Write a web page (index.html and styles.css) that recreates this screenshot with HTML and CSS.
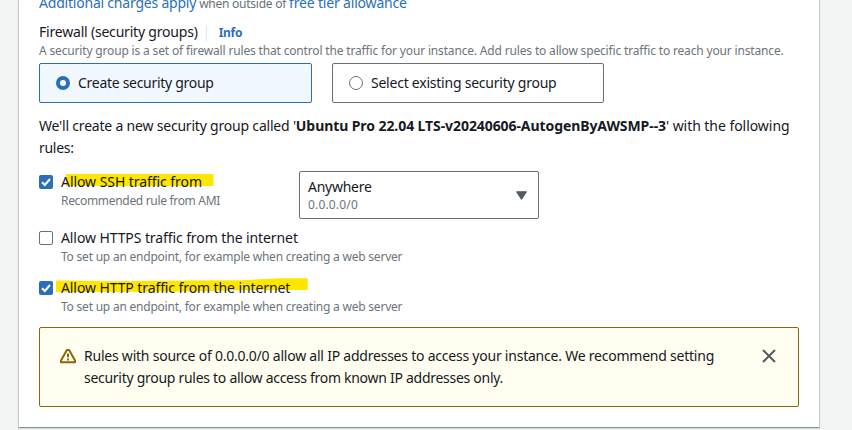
FILE: index.html
```
<!DOCTYPE html>
<html lang="en">
<head>
<meta charset="utf-8">
<title>Firewall (security groups)</title>
<link rel="stylesheet" href="styles.css">
</head>
<body>
<main class="card">
  <p class="charges"><a class="link charges-link">Additional charges apply</a><span class="charges-note">when outside of</span><a class="link tier-link">free tier allowance</a></p>

  <header class="field-header"><h2>Firewall (security groups)</h2><a class="info">Info</a></header>
  <p class="hint field-hint">A security group is a set of firewall rules that control the traffic for your instance. Add rules to allow specific traffic to reach your instance.</p>

  <div class="tiles">
    <label class="tile tile-selected"><span class="radio radio-on"></span><span class="create-label">Create security group</span></label>
    <label class="tile"><span class="radio"></span><span class="select-label">Select existing security group</span></label>
  </div>

  <p class="summary"><span class="summary-lead">We'll create a new security group called '</span><b>Ubuntu Pro 22.04 LTS-v20240606-AutogenByAWSMP--3</b><span class="summary-tail">' with the following</span><br><span class="summary-end">rules:</span></p>

  <section class="rules">
    <div class="rule rule-ssh">
      <span class="checkbox checked"><svg viewBox="0 0 14 14"><path d="M3 7.2 5.8 10 11 4"/></svg></span>
      <div class="rule-text">
        <svg class="marker marker-ssh" viewBox="0 0 148 12" preserveAspectRatio="none"><path d="M0 0H147.5V12H0Z"/></svg>
        <div class="rule-title ssh-title">Allow SSH traffic from</div>
        <div class="hint ami-hint">Recommended rule from AMI</div>
      </div>
      <div class="select">
        <div class="select-text"><div class="select-value">Anywhere</div><div class="hint select-hint">0.0.0.0/0</div></div>
        <svg class="caret" viewBox="0 0 10 8"><path d="M.7 .7H9.3L5 7.3Z"/></svg>
      </div>
    </div>
    <div class="rule rule-web">
      <span class="checkbox"></span>
      <div class="rule-text">
        <div class="rule-title">Allow HTTPS traffic from the internet</div>
        <div class="hint web-hint">To set up an endpoint, for example when creating a web server</div>
      </div>
    </div>
    <div class="rule rule-web">
      <span class="checkbox checked"><svg viewBox="0 0 14 14"><path d="M3 7.2 5.8 10 11 4"/></svg></span>
      <div class="rule-text">
        <svg class="marker marker-http" viewBox="0 0 252 15"><path d="M0 2.5 60 3.2 130 2.6 185 2.2 225 .2H251.7V12H205L130 13.5 70 14H0Z"/></svg>
        <div class="rule-title">Allow HTTP traffic from the internet</div>
        <div class="hint web-hint">To set up an endpoint, for example when creating a web server</div>
      </div>
    </div>
  </section>

  <aside class="alert">
    <svg class="warning" viewBox="0 0 16 16"><path d="M6.9 2 1 12.6V14.2H15V12.6L9.1 2Z"/><path d="M8 5.4V9.2M8 10.4V12.4"/></svg>
    <p class="alert-text"><span class="alert-first">Rules with source of 0.0.0.0/0 allow all IP addresses to access your instance. We recommend setting</span><br><span class="alert-second">security group rules to allow access from known IP addresses only.</span></p>
    <svg class="close" viewBox="0 0 14 14"><path d="M1 1 13 13M13 1 1 13"/></svg>
  </aside>
</main>
</body>
</html>
```
FILE: styles.css
```
* { box-sizing: border-box; }
body {
  margin: 0;
  height: 430px;
  padding: 0 32px 2px 18px;
  overflow: hidden;
  background: #f2f3f3;
  color: #16191f;
  font: 14px/22px "Noto Sans", sans-serif;
}
p, h2 { margin: 0; }
.card {
  display: flow-root;
  width: 802px;
  height: 428px;
  padding: 0 20px;
  background: #fff;
  border: 1px solid #c9cccd;
  border-top: 0;
  border-bottom-color: #879196;
  box-shadow: 0 1px 1px #d5dbdb;
}
.charges { margin-top: -8px; height: 22px; white-space: nowrap; }
.link { color: #2b6fbb; }
.charges-link { letter-spacing: -.21px; margin-right: 3px; }
.charges-note { font-size: 12px; color: #687078; letter-spacing: -.25px; margin-right: 3px; }
.tier-link { letter-spacing: -.18px; }
.field-header { display: flex; align-items: center; margin-top: 7px; height: 22px; }
h2 { font-size: 14px; font-weight: 400; letter-spacing: -.2px; line-height: 22px; }
.info {
  margin: 2px 0 0 8px;
  padding-left: 12px;
  border-left: 1px solid #e4e7e7;
  color: #2b6fbb;
  font-size: 12px;
  font-weight: 700;
  line-height: 16px;
  letter-spacing: -.3px;
}
.hint { color: #6c747b; font-size: 12px; line-height: 18px; white-space: nowrap; }
.field-hint { line-height: 20px; margin-top: -2px; letter-spacing: -.163px; }
.tiles { display: grid; grid-template-columns: 273px 272px; gap: 20px; margin-top: 2px; }
.tile {
  display: flex;
  align-items: center;
  gap: 8px;
  height: 40px;
  padding: 0 16px;
  border: 1px solid #687078;
  border-radius: 2px;
}
.tile-selected { background: #f1f8ff; border-color: #2b6fbb; }
.radio { width: 14px; height: 14px; border: 1px solid #687078; border-radius: 50%; background: #fff; }
.radio-on { border: 4px solid #2b6fbb; }
.create-label { letter-spacing: -.29px; }
.select-label { letter-spacing: -.233px; }
.summary { margin-top: 12px; white-space: nowrap; }
.summary-lead { letter-spacing: -.2px; }
.summary b { letter-spacing: -.08px; }
.summary-tail { letter-spacing: -.05px; }
.summary-end { letter-spacing: -.3px; }
.rules { margin-top: 12px; }
.rule { display: flex; height: 50px; }
.rule-ssh { height: 56px; }
.checkbox { width: 14px; height: 14px; margin: 4px 8px 0 0; border: 1px solid #687078; border-radius: 2px; }
.checked { border: 0; background: #2b6fbb; }
.checked svg { display: block; width: 14px; height: 14px; fill: none; stroke: #fff; stroke-width: 2; }
.rule-text { position: relative; width: 238px; white-space: nowrap; }
.rule-title { position: relative; letter-spacing: -.095px; height: 21px; }
.ssh-title { letter-spacing: -.06px; }
.rule-text .hint { position: relative; }
.marker { position: absolute; fill: #ffe600; }
.marker-ssh { left: 5px; top: 3px; width: 148px; height: 12px; }
.marker-http { left: -5px; top: 1px; width: 252px; height: 15px; }
.ami-hint { letter-spacing: -.32px; }
.web-hint { letter-spacing: -.22px; }
.select {
  display: flex;
  align-items: center;
  justify-content: space-between;
  width: 240px;
  height: 48px;
  padding: 0 11px 0 8px;
  border: 1px solid #687078;
  border-radius: 2px;
}
.select-value { letter-spacing: -.27px; height: 20px; line-height: 21px; }
.select-hint { letter-spacing: .17px; }
.caret { width: 11px; height: 9px; fill: #545b64; stroke: #545b64; stroke-linejoin: round; }
.alert {
  display: flex;
  height: 80px;
  padding: 17px 22px 0 20px;
  border: 1px solid #8d6605;
  border-radius: 2px;
  background: #fffef0;
}
.warning { width: 16px; height: 16px; margin: 3px 8px 0 0; fill: none; stroke: #8d6605; stroke-width: 2; stroke-linejoin: round; }
.alert-text { flex: 1; white-space: nowrap; }
.alert-first { letter-spacing: -.227px; }
.alert-second { letter-spacing: -.28px; }
.close { width: 14px; height: 14px; margin-top: 4px; fill: none; stroke: #545b64; stroke-width: 2; }
```
